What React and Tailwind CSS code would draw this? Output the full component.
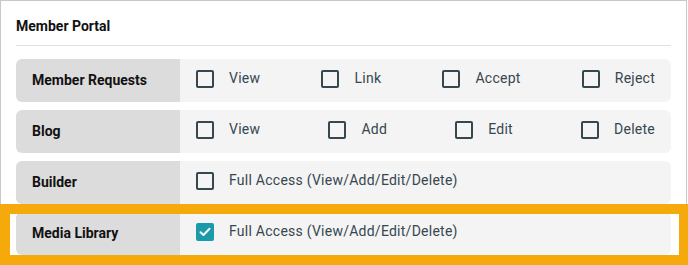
import React from 'react';

const rows = [
  { label: 'Member Requests', options: ['View', 'Link', 'Accept', 'Reject'] },
  { label: 'Blog', options: ['View', 'Add', 'Edit', 'Delete'] },
  { label: 'Builder', options: ['Full Access (View/Add/Edit/Delete)'] },
  { label: 'Media Library', options: ['Full Access (View/Add/Edit/Delete)'], checked: true, highlight: true },
];

const Checkbox = ({ checked }) =>
  checked ? (
    <span className="flex h-[18px] w-[18px] items-center justify-center rounded-[2px] bg-[#1b9aa9]">
      <svg width="12" height="10" viewBox="0 0 12 10" fill="none">
        <path d="M1.5 5.2 L4.5 8 L10.5 1.8" stroke="white" strokeWidth="2" strokeLinecap="round" strokeLinejoin="round" />
      </svg>
    </span>
  ) : (
    <span className="block h-[18px] w-[18px] rounded-[2px] border-2 border-[#37474f]" />
  );

const PermissionRow = ({ row }) => (
  <div className="relative flex h-[43px]">
    <div className="flex w-[164px] items-center rounded-l-md bg-[#dcdcdc] pl-4 text-[14px] font-bold text-[#111]">
      {row.label}
    </div>
    <div
      className={
        'flex flex-1 items-center rounded-r-md bg-[#f4f4f4] px-4 pb-1 ' +
        (row.options.length > 1 ? 'justify-between' : 'justify-start')
      }
    >
      {row.options.map((opt) => (
        <label key={opt} className="flex items-center gap-[15px] text-[14px] tracking-[0.25px] text-[#37474f]">
          <Checkbox checked={row.checked} />
          <span>{opt}</span>
        </label>
      ))}
    </div>
    {row.highlight && (
      <div className="pointer-events-none absolute -left-4 -right-[18px] -top-2 -bottom-[10px] border-[10px] border-[#f6a90b]" />
    )}
  </div>
);

export default function App() {
  return (
    <div className="h-[265px] w-[688px] overflow-hidden bg-white" style={{ fontFamily: 'Roboto, "Liberation Sans", sans-serif' }}>
      <div className="w-[687px] border border-[#c8c8c8] bg-white px-[15px] pb-10 pt-[15px]">
        <div className="h-5 text-[14px] font-bold leading-5 text-[#111]">Member Portal</div>
        <div className="mt-[9px] border-t border-[#e0e0e0]" />
        <div className="mt-[13px] flex flex-col gap-2">
          {rows.map((r) => (
            <PermissionRow key={r.label} row={r} />
          ))}
        </div>
      </div>
    </div>
  );
}
